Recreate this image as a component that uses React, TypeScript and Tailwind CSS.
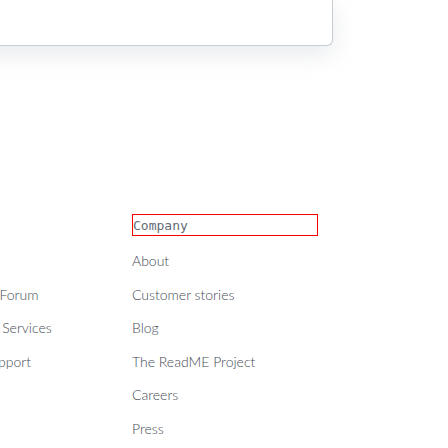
import React from "react";

const support = ["Docs", "Community Forum", "Professional Services", "Premium Support", "Skills", "Status", "Contact GitHub"];
const company = ["About", "Customer stories", "Blog", "The ReadME Project", "Careers", "Press"];

export default function App() {
  return (
    <div className="w-[448px] h-[448px] overflow-hidden bg-white relative" style={{ fontFamily: 'Lato, sans-serif' }}>
      <div className="ml-[-40px] w-[373px] h-[46px] bg-white rounded-b-[6px] border border-t-0 border-[#c8cdd3] shadow-[0_8px_24px_rgba(140,149,159,0.2)]" />
      <div className="flex mt-[168px]">
        <div className="ml-[-74px] w-[206px] shrink-0 flex flex-col">
          <div className="h-[22px] mb-[14px]" />
          <ul className="flex flex-col gap-[12.6px] text-[14px] leading-[21px] text-[#434b55] font-light">
            {support.map((s) => (
              <li key={s} className="whitespace-nowrap">{s}</li>
            ))}
          </ul>
        </div>
        <div className="w-[186px] shrink-0 flex flex-col">
          <h2 className="h-[22px] mb-[14px] outline outline-1 outline-[#ff0000] -outline-offset-1 text-[13px] leading-[23px] text-[#636c76] pl-px" style={{ fontFamily: '"DejaVu Sans Mono", monospace' }}>
            Company
          </h2>
          <ul className="flex flex-col gap-[12.6px] text-[14px] leading-[21px] text-[#434b55] font-light">
            {company.map((s) => (
              <li key={s} className="whitespace-nowrap">{s}</li>
            ))}
          </ul>
        </div>
      </div>
    </div>
  );
}
